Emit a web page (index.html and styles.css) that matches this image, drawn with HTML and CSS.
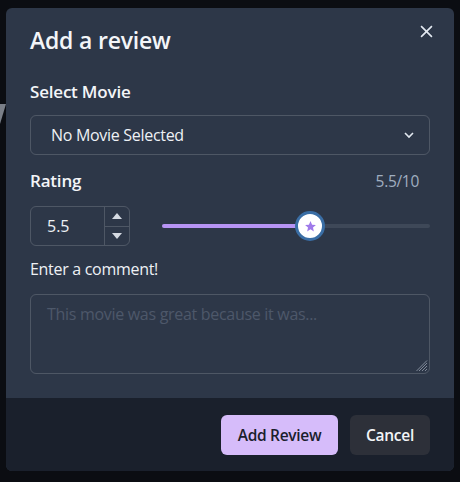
FILE: index.html
```html
<!DOCTYPE html>
<html>
<head>
<meta charset="utf-8">
<link rel="stylesheet" href="styles.css">
</head>
<body>
<div class="backdrop">
  <div class="edge-left"></div>
  <div class="modal">
    <header class="modal-header">
      <h2 class="title">Add a review</h2>
      <button class="close" aria-label="Close">
        <svg width="13" height="13" viewBox="0 0 12 12"><path d="M1 1 L11 11 M11 1 L1 11" stroke="#e2e8f0" stroke-width="1.5" fill="none"/></svg>
      </button>
    </header>
    <div class="modal-body">
      <label class="label">Select Movie</label>
      <div class="select">
        <span>No Movie Selected</span>
        <svg width="12" height="8" viewBox="0 0 12 8"><path d="M2 2 L6 6 L10 2" stroke="#e2e8f0" stroke-width="1.6" fill="none"/></svg>
      </div>
      <div class="rating-head">
        <label class="label">Rating</label>
        <span class="rating-value">5.5/10</span>
      </div>
      <div class="rating-row">
        <div class="number-input">
          <span class="num">5.5</span>
          <div class="stepper">
            <div class="step"><svg width="12" height="8" viewBox="0 0 12 8"><path d="M6 1 L11 7 L1 7 Z" fill="#d4d9e1"/></svg></div>
            <div class="step"><svg width="12" height="8" viewBox="0 0 12 8"><path d="M1 1 L11 1 L6 7 Z" fill="#d4d9e1"/></svg></div>
          </div>
        </div>
        <div class="slider">
          <div class="track"><div class="fill" style="width: 148px"></div></div>
          <div class="thumb" style="left: 148px">
            <svg width="13" height="13" viewBox="0 0 24 24"><path d="M12 2 L14.9 8.6 L22 9.3 L16.6 14 L18.2 21 L12 17.3 L5.8 21 L7.4 14 L2 9.3 L9.1 8.6 Z" fill="#9f7aea"/></svg>
          </div>
        </div>
      </div>
      <label class="comment-label">Enter a comment!</label>
      <div class="textarea">
        <span class="placeholder">This movie was great because it was...</span>
        <svg class="grip" width="12" height="12" viewBox="0 0 12 12"><path d="M11 3 L3 11 M11 6 L6 11 M11 9 L9 11 M11 0.5 L0.5 11" stroke="#8a93a3" stroke-width="0.9"/></svg>
      </div>
    </div>
    <footer class="modal-footer">
      <button class="btn primary">Add Review</button>
      <button class="btn ghost">Cancel</button>
    </footer>
  </div>
</div>
</body>
</html>
```

FILE: styles.css
```css
* { box-sizing: border-box; }
html, body { margin: 0; padding: 0; }
body {
  background: #0b0d12;
  font-family: "Open Sans", "Noto Sans", sans-serif;
  color: #f7fafc;
  width: 460px;
  height: 482px;
  overflow: hidden;
}
.backdrop {
  position: relative;
  padding: 8px 6px;
  height: 482px;
}
.edge-left {
  position: absolute;
  left: 0;
  top: 104px;
  width: 0;
  height: 0;
  border-left: 6px solid #7a7f88;
  border-bottom: 20px solid transparent;
}
.modal {
  position: relative;
  width: 448px;
  height: 463px;
  background: #2d3748;
  border-radius: 6px;
  display: flex;
  flex-direction: column;
  overflow: hidden;
}
.modal-header {
  padding: 16px 24px 16px;
}
.title {
  margin: 0;
  font-size: 23px;
  line-height: 32px;
  font-weight: 600;
  letter-spacing: -0.2px;
  color: #f3f5f8;
}
.close {
  position: absolute;
  top: 17px;
  right: 21px;
  width: 13px;
  height: 13px;
  padding: 0;
  border: none;
  background: none;
  display: flex;
  align-items: center;
  justify-content: center;
}
.modal-body {
  padding: 8px 24px 0;
  flex: 1;
  display: flex;
  flex-direction: column;
}
.label {
  font-size: 17px;
  line-height: 24px;
  font-weight: 600;
  letter-spacing: -0.2px;
  color: #f3f5f8;
}
.select {
  margin-top: 11px;
  height: 40px;
  border: 1px solid rgba(255,255,255,0.16);
  border-radius: 6px;
  display: flex;
  align-items: center;
  justify-content: space-between;
  padding: 0 14px 0 20px;
  font-size: 16px;
  letter-spacing: -0.3px;
  color: #eef1f5;
}
.rating-head {
  margin-top: 14px;
  display: flex;
  justify-content: space-between;
  align-items: center;
  padding-right: 11px;
}
.rating-value {
  font-size: 15.5px;
  color: #a0aec0;
  letter-spacing: -0.3px;
}
.rating-row {
  margin-top: 13px;
  display: flex;
  align-items: center;
  gap: 32px;
}
.number-input {
  width: 100px;
  height: 40px;
  border: 1px solid rgba(255,255,255,0.16);
  border-radius: 6px;
  display: flex;
}
.num {
  flex: 1;
  display: flex;
  align-items: center;
  padding-left: 16px;
  font-size: 16px;
  color: #eef1f5;
}
.stepper {
  width: 25px;
  border-left: 1px solid rgba(255,255,255,0.16);
  display: flex;
  flex-direction: column;
}
.step {
  flex: 1;
  display: flex;
  align-items: center;
  justify-content: center;
}
.step + .step { border-top: 1px solid rgba(255,255,255,0.16); }
.slider {
  position: relative;
  flex: 1;
  height: 30px;
  display: flex;
  align-items: center;
}
.track {
  width: 100%;
  height: 4px;
  border-radius: 2px;
  background: #3e4858;
  overflow: hidden;
}
.fill {
  height: 100%;
  background: #b794f4;
}
.thumb {
  position: absolute;
  top: 0;
  width: 30px;
  height: 30px;
  margin-left: -15px;
  border-radius: 50%;
  background: #ffffff;
  border: 3px solid #3a6ea5;
  display: flex;
  align-items: center;
  justify-content: center;
}
.comment-label {
  margin-top: 11px;
  font-size: 16px;
  line-height: 24px;
  letter-spacing: -0.3px;
  color: #eef1f5;
}
.textarea {
  position: relative;
  margin-top: 13px;
  height: 80px;
  border: 1px solid rgba(255,255,255,0.16);
  border-radius: 6px;
  padding: 8px 16px;
}
.placeholder {
  font-size: 16px;
  letter-spacing: -0.3px;
  color: #4d586a;
}
.grip {
  position: absolute;
  right: 1px;
  bottom: 1px;
}
.modal-footer {
  height: 73px;
  background: #1a202c;
  display: flex;
  justify-content: flex-end;
  align-items: center;
  gap: 12px;
  padding: 0 24px;
}
.btn {
  height: 40px;
  border: none;
  border-radius: 6px;
  font-family: inherit;
  font-size: 15.5px;
  font-weight: 600;
  letter-spacing: -0.3px;
  padding: 0 16px;
}
.primary {
  background: #d6bcfa;
  color: #1a202c;
  width: 117px;
}
.ghost {
  background: #2d3039;
  color: #f3f5f8;
  width: 80px;
}
```
